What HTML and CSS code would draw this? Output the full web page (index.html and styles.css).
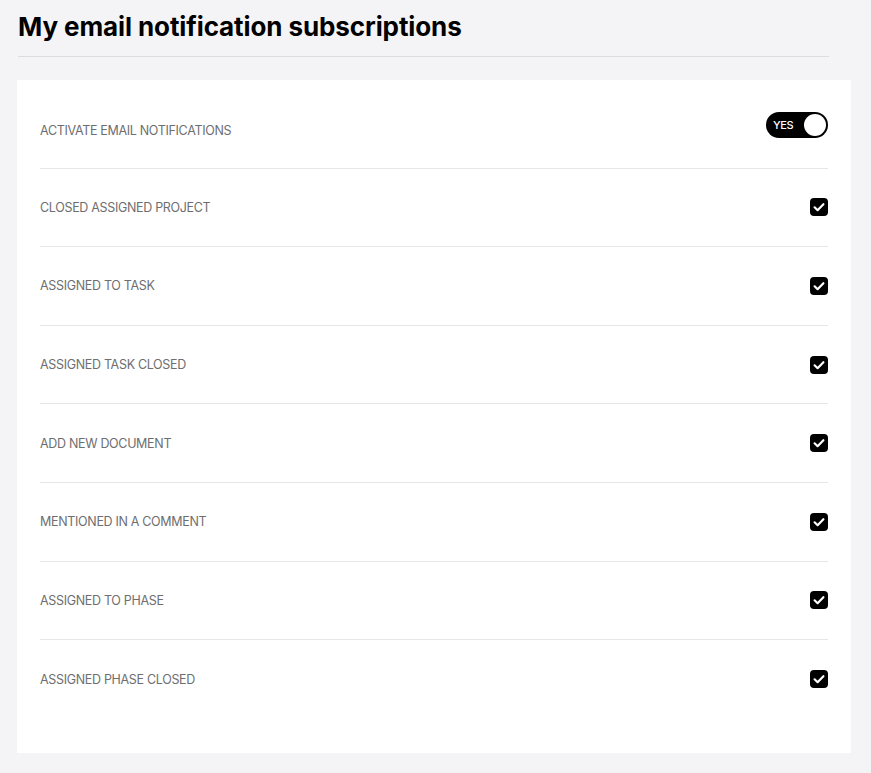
FILE: index.html
```html
<!DOCTYPE html>
<html lang="en">
<head>
  <meta charset="UTF-8">
  <meta name="viewport" content="width=device-width, initial-scale=1.0">
  <title>Email notifications</title>
  <link rel="stylesheet" href="styles.css">
</head>
<body>
  <div class="page">
    <div class="page-head">
      <h1>My email notification subscriptions</h1>
    </div>
    <div class="card">
      <div class="row first">
        <span class="label">Activate email notifications</span>
        <span class="toggle"><span class="toggle-text">YES</span><span class="knob"></span></span>
      </div>
      <div class="row">
        <span class="label">Closed assigned project</span>
        <span class="check"><svg viewBox="0 0 18 18" width="18" height="18"><path d="M4.6 9.3l3 2.9 5.8-6" fill="none" stroke="#fff" stroke-width="2.2" stroke-linecap="round" stroke-linejoin="round"/></svg></span>
      </div>
      <div class="row">
        <span class="label">Assigned to task</span>
        <span class="check"><svg viewBox="0 0 18 18" width="18" height="18"><path d="M4.6 9.3l3 2.9 5.8-6" fill="none" stroke="#fff" stroke-width="2.2" stroke-linecap="round" stroke-linejoin="round"/></svg></span>
      </div>
      <div class="row">
        <span class="label">Assigned task closed</span>
        <span class="check"><svg viewBox="0 0 18 18" width="18" height="18"><path d="M4.6 9.3l3 2.9 5.8-6" fill="none" stroke="#fff" stroke-width="2.2" stroke-linecap="round" stroke-linejoin="round"/></svg></span>
      </div>
      <div class="row">
        <span class="label">Add new document</span>
        <span class="check"><svg viewBox="0 0 18 18" width="18" height="18"><path d="M4.6 9.3l3 2.9 5.8-6" fill="none" stroke="#fff" stroke-width="2.2" stroke-linecap="round" stroke-linejoin="round"/></svg></span>
      </div>
      <div class="row">
        <span class="label">Mentioned in a comment</span>
        <span class="check"><svg viewBox="0 0 18 18" width="18" height="18"><path d="M4.6 9.3l3 2.9 5.8-6" fill="none" stroke="#fff" stroke-width="2.2" stroke-linecap="round" stroke-linejoin="round"/></svg></span>
      </div>
      <div class="row">
        <span class="label">Assigned to phase</span>
        <span class="check"><svg viewBox="0 0 18 18" width="18" height="18"><path d="M4.6 9.3l3 2.9 5.8-6" fill="none" stroke="#fff" stroke-width="2.2" stroke-linecap="round" stroke-linejoin="round"/></svg></span>
      </div>
      <div class="row">
        <span class="label">Assigned phase closed</span>
        <span class="check"><svg viewBox="0 0 18 18" width="18" height="18"><path d="M4.6 9.3l3 2.9 5.8-6" fill="none" stroke="#fff" stroke-width="2.2" stroke-linecap="round" stroke-linejoin="round"/></svg></span>
      </div>
    </div>
  </div>
</body>
</html>
```

FILE: styles.css
```css
html,body{margin:0; padding:0;}
body{background-color:#f4f4f6; font-family:Inter, "Liberation Sans", sans-serif; color:#000;}
.page{padding:0 20px 21px 17px;}
.page-head{margin:0 22px 0 1px; padding-top:9px; border-bottom:1px solid #dcdce0;}
.page-head h1{margin:0; padding-bottom:11px; font-size:26px; line-height:36px; font-weight:700; letter-spacing:-0.1px;}
.card{margin-top:23px; padding:10px 23px 34px; background-color:#fff;}
.row{display:flex; align-items:center; justify-content:space-between; height:78.6px; box-sizing:border-box; border-bottom:1px solid #e6e6e8;}
.row:last-child{border-bottom:0;}
.row.first{padding-top:4px;}
.label{font-size:12.5px; text-transform:uppercase; color:#6e6e70; letter-spacing:-0.32px;}
.toggle{display:flex; align-items:center; justify-content:space-between; width:62px; height:26px; margin-bottom:12px; padding:0 2px 0 7px; box-sizing:border-box; background-color:#000; border-radius:13px;}
.toggle-text{color:#fff; font-size:11px; font-weight:500; letter-spacing:-0.4px;}
.knob{width:22px; height:22px; border-radius:50%; background-color:#fff;}
.check{display:block; width:18px; height:18px; background-color:#000; border-radius:4px;}
.check svg{display:block;}
```
